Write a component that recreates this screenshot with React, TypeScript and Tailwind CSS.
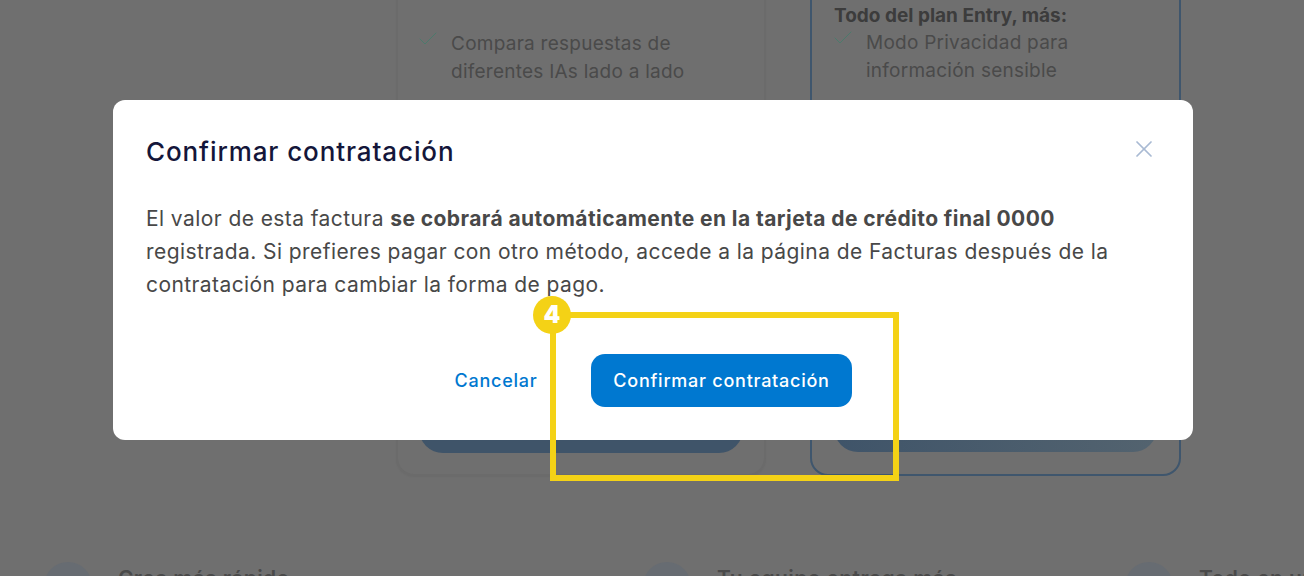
import { X, Check } from "lucide-react";

const font = { fontFamily: "Inter, 'Noto Sans', sans-serif" };

function PlanCard({
  heading,
  lines,
  highlighted,
}: {
  heading?: string;
  lines: string[];
  highlighted?: boolean;
}) {
  return (
    <div
      className={`flex h-[495px] flex-col justify-between rounded-[18px] border-2 ${
        highlighted
          ? "w-[371px] border-[#3f566d] pr-[22px] pb-[22px] pl-[22px]"
          : "w-[370px] border-[#6b6b6b] px-[21px] pb-[21px] shadow-[0_1px_2px_rgba(0,0,0,0.04)]"
      }`}
    >
      <div className={highlighted ? "pt-[20px]" : "pt-[47px]"}>
        {heading && (
          <p className="text-[19px] leading-[26px] font-bold text-[#3c3c3c]">{heading}</p>
        )}
        <div className="flex gap-[11px]">
          <Check
            className="mt-[-3px] ml-[-3px] h-[24px] w-[24px] shrink-0 text-[#4c7a6c]"
            strokeWidth={1}
          />
          <p className="text-[19px] leading-[28px] tracking-[0.25px] text-[#4a4a4a]">
            {lines[0]}
            <br />
            {lines[1]}
          </p>
        </div>
      </div>
      <div
        className={`h-[50px] rounded-b-[24px] ${
          highlighted ? "bg-gradient-to-r from-[#3f5469] to-[#53636f]" : "bg-[#3f5469]"
        }`}
      />
    </div>
  );
}

function Benefit({ title, className }: { title: string; className: string }) {
  return (
    <div className={`flex shrink-0 items-start gap-[26px] ${className}`}>
      <div className="h-[48px] w-[48px] shrink-0 rounded-full bg-[#676c72]" />
      <p className="pt-[1px] text-[21px] font-semibold tracking-[0.4px] whitespace-nowrap text-[#4a4a4a]">
        {title}
      </p>
    </div>
  );
}

export default function App() {
  return (
    <div className="relative h-[576px] w-full overflow-hidden bg-[#6f6f6f]" style={font}>
      {/* page behind the dialog */}
      <div className="flex flex-col">
        <div className="mt-[-19px] flex gap-[44px] pl-[396px]">
          <PlanCard lines={["Compara respuestas de", "diferentes IAs lado a lado"]} />
          <PlanCard
            highlighted
            heading="Todo del plan Entry, más:"
            lines={["Modo Privacidad para", "información sensible"]}
          />
        </div>
        <div className="mt-[86px] flex pl-[44px]">
          <Benefit title="Crea más rápido" className="w-[599px]" />
          <Benefit title="Tu equipo entrega más" className="w-[482px]" />
          <Benefit title="Todo en un solo lugar" className="w-[180px]" />
        </div>
      </div>

      {/* dialog */}
      <div className="absolute top-[100px] left-[113px] h-[340px] w-[1080px] rounded-[12px] bg-white px-[33px] pt-[33px]">
        <div className="flex items-start justify-between">
          <h2 className="text-[26px] leading-[38px] font-medium tracking-[0.9px] text-[#14163a]">
            Confirmar contratación
          </h2>
          <X className="mt-[2px] mr-[2px] h-[28px] w-[28px] text-[#a9bad3]" strokeWidth={1.5} />
        </div>
        <p className="mt-[31px] w-[1005px] text-[21px] leading-[33px] tracking-[0.42px] text-[#484848]">
          El valor de esta factura{" "}
          <strong className="font-bold">
            se cobrará automáticamente en la tarjeta de crédito final 0000
          </strong>{" "}
          registrada. Si prefieres pagar con otro método, accede a la página de Facturas después de
          la contratación para cambiar la forma de pago.
        </p>
        <div className="mt-[53px] flex items-center pl-[300px]">
          <button className="w-[100px] text-center text-[18px] font-medium tracking-[0.75px] text-[#0078d0]">
            Cancelar
          </button>
          <button className="ml-[45px] h-[53px] w-[261px] rounded-[14px] bg-[#0078d0] text-[18px] font-medium tracking-[0.75px] text-white">
            Confirmar contratación
          </button>
        </div>
      </div>

      {/* tutorial marker */}
      <div className="absolute top-[312px] left-[550px] h-[169px] w-[349px] border-[6px] border-[#f4d216]" />
      <div className="absolute top-[296px] left-[533px] flex h-[38px] w-[38px] items-center justify-center rounded-full bg-[#f4d216] text-[24px] font-black text-white">
        4
      </div>
    </div>
  );
}
